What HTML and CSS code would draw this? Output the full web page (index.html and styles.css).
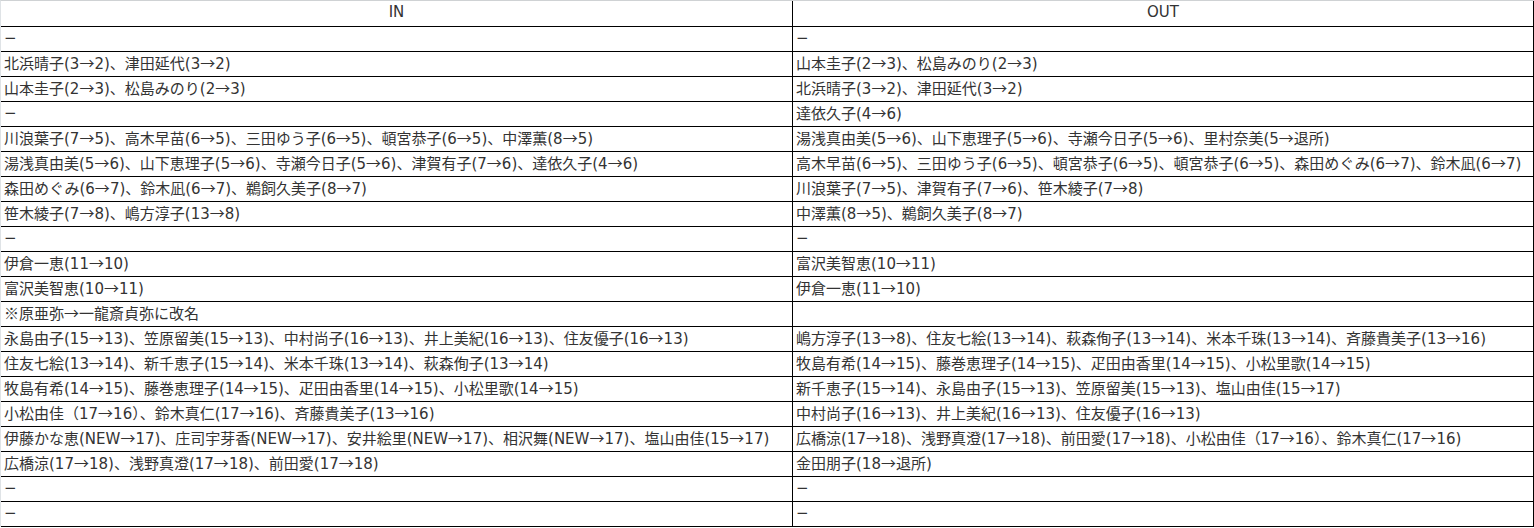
FILE: index.html
```html
<!DOCTYPE html>
<html lang="ja">
<head>
<meta charset="utf-8">
<title>IN / OUT</title>
<link rel="stylesheet" href="styles.css">
</head>
<body>
<div class="sheet">
  <div class="cell head">IN</div>
  <div class="cell head">OUT</div>

  <div class="cell">−</div>
  <div class="cell">−</div>

  <div class="cell">北浜晴子(3<span class="ar">→</span>2)、津田延代(3<span class="ar">→</span>2)</div>
  <div class="cell">山本圭子(2<span class="ar">→</span>3)、松島みのり(2<span class="ar">→</span>3)</div>

  <div class="cell">山本圭子(2<span class="ar">→</span>3)、松島みのり(2<span class="ar">→</span>3)</div>
  <div class="cell">北浜晴子(3<span class="ar">→</span>2)、津田延代(3<span class="ar">→</span>2)</div>

  <div class="cell">−</div>
  <div class="cell">達依久子(4<span class="ar">→</span>6)</div>

  <div class="cell">川浪葉子(7<span class="ar">→</span>5)、高木早苗(6<span class="ar">→</span>5)、三田ゆう子(6<span class="ar">→</span>5)、頓宮恭子(6<span class="ar">→</span>5)、中澤薫(8<span class="ar">→</span>5)</div>
  <div class="cell">湯浅真由美(5<span class="ar">→</span>6)、山下恵理子(5<span class="ar">→</span>6)、寺瀬今日子(5<span class="ar">→</span>6)、里村奈美(5<span class="ar">→</span>退所)</div>

  <div class="cell">湯浅真由美(5<span class="ar">→</span>6)、山下恵理子(5<span class="ar">→</span>6)、寺瀬今日子(5<span class="ar">→</span>6)、津賀有子(7<span class="ar">→</span>6)、達依久子(4<span class="ar">→</span>6)</div>
  <div class="cell">高木早苗(6<span class="ar">→</span>5)、三田ゆう子(6<span class="ar">→</span>5)、頓宮恭子(6<span class="ar">→</span>5)、頓宮恭子(6<span class="ar">→</span>5)、森田めぐみ(6<span class="ar">→</span>7)、鈴木凪(6<span class="ar">→</span>7)</div>

  <div class="cell">森田めぐみ(6<span class="ar">→</span>7)、鈴木凪(6<span class="ar">→</span>7)、鵜飼久美子(8<span class="ar">→</span>7)</div>
  <div class="cell">川浪葉子(7<span class="ar">→</span>5)、津賀有子(7<span class="ar">→</span>6)、笹木綾子(7<span class="ar">→</span>8)</div>

  <div class="cell">笹木綾子(7<span class="ar">→</span>8)、嶋方淳子(13<span class="ar">→</span>8)</div>
  <div class="cell">中澤薫(8<span class="ar">→</span>5)、鵜飼久美子(8<span class="ar">→</span>7)</div>

  <div class="cell">−</div>
  <div class="cell">−</div>

  <div class="cell">伊倉一恵(11<span class="ar">→</span>10)</div>
  <div class="cell">富沢美智恵(10<span class="ar">→</span>11)</div>

  <div class="cell">富沢美智恵(10<span class="ar">→</span>11)</div>
  <div class="cell">伊倉一恵(11<span class="ar">→</span>10)</div>

  <div class="cell"><span class="ar">※</span>原亜弥<span class="ar">→</span>一龍斎貞弥に改名</div>
  <div class="cell"></div>

  <div class="cell">永島由子(15<span class="ar">→</span>13)、笠原留美(15<span class="ar">→</span>13)、中村尚子(16<span class="ar">→</span>13)、井上美紀(16<span class="ar">→</span>13)、住友優子(16<span class="ar">→</span>13)</div>
  <div class="cell">嶋方淳子(13<span class="ar">→</span>8)、住友七絵(13<span class="ar">→</span>14)、萩森侚子(13<span class="ar">→</span>14)、米本千珠(13<span class="ar">→</span>14)、斉藤貴美子(13<span class="ar">→</span>16)</div>

  <div class="cell">住友七絵(13<span class="ar">→</span>14)、新千恵子(15<span class="ar">→</span>14)、米本千珠(13<span class="ar">→</span>14)、萩森侚子(13<span class="ar">→</span>14)</div>
  <div class="cell">牧島有希(14<span class="ar">→</span>15)、藤巻恵理子(14<span class="ar">→</span>15)、疋田由香里(14<span class="ar">→</span>15)、小松里歌(14<span class="ar">→</span>15)</div>

  <div class="cell">牧島有希(14<span class="ar">→</span>15)、藤巻恵理子(14<span class="ar">→</span>15)、疋田由香里(14<span class="ar">→</span>15)、小松里歌(14<span class="ar">→</span>15)</div>
  <div class="cell">新千恵子(15<span class="ar">→</span>14)、永島由子(15<span class="ar">→</span>13)、笠原留美(15<span class="ar">→</span>13)、塩山由佳(15<span class="ar">→</span>17)</div>

  <div class="cell">小松由佳（17<span class="ar">→</span>16）、鈴木真仁(17<span class="ar">→</span>16)、斉藤貴美子(13<span class="ar">→</span>16)</div>
  <div class="cell">中村尚子(16<span class="ar">→</span>13)、井上美紀(16<span class="ar">→</span>13)、住友優子(16<span class="ar">→</span>13)</div>

  <div class="cell">伊藤かな恵(NEW<span class="ar">→</span>17)、庄司宇芽香(NEW<span class="ar">→</span>17)、安井絵里(NEW<span class="ar">→</span>17)、相沢舞(NEW<span class="ar">→</span>17)、塩山由佳(15<span class="ar">→</span>17)</div>
  <div class="cell">広橋涼(17<span class="ar">→</span>18)、浅野真澄(17<span class="ar">→</span>18)、前田愛(17<span class="ar">→</span>18)、小松由佳（17<span class="ar">→</span>16）、鈴木真仁(17<span class="ar">→</span>16)</div>

  <div class="cell">広橋涼(17<span class="ar">→</span>18)、浅野真澄(17<span class="ar">→</span>18)、前田愛(17<span class="ar">→</span>18)</div>
  <div class="cell">金田朋子(18<span class="ar">→</span>退所)</div>

  <div class="cell">−</div>
  <div class="cell">−</div>

  <div class="cell">−</div>
  <div class="cell">−</div>
</div>
</body>
</html>
```
FILE: styles.css
```css
html, body {
  margin: 0;
  padding: 0;
  background: #ffffff;
}

.sheet {
  display: grid;
  grid-template-columns: 792px 741px;
  grid-template-rows: 26px;
  grid-auto-rows: 25px;
  width: 1534px;
  box-sizing: border-box;
  border-top: 1px solid #cfd2d4;
  border-left: 1px solid #dfe3e6;
  font-family: "DejaVu Sans", "Noto Sans CJK JP", sans-serif;
  font-size: 15px;
  color: #333333;
}

.cell {
  box-sizing: border-box;
  border-right: 1px solid #000000;
  border-bottom: 1px solid #000000;
  padding: 0 3px;
  line-height: 22px;
  white-space: nowrap;
  overflow: hidden;
}

.head {
  text-align: center;
}

.ar {
  font-family: "Noto Sans CJK JP", sans-serif;
}
```
